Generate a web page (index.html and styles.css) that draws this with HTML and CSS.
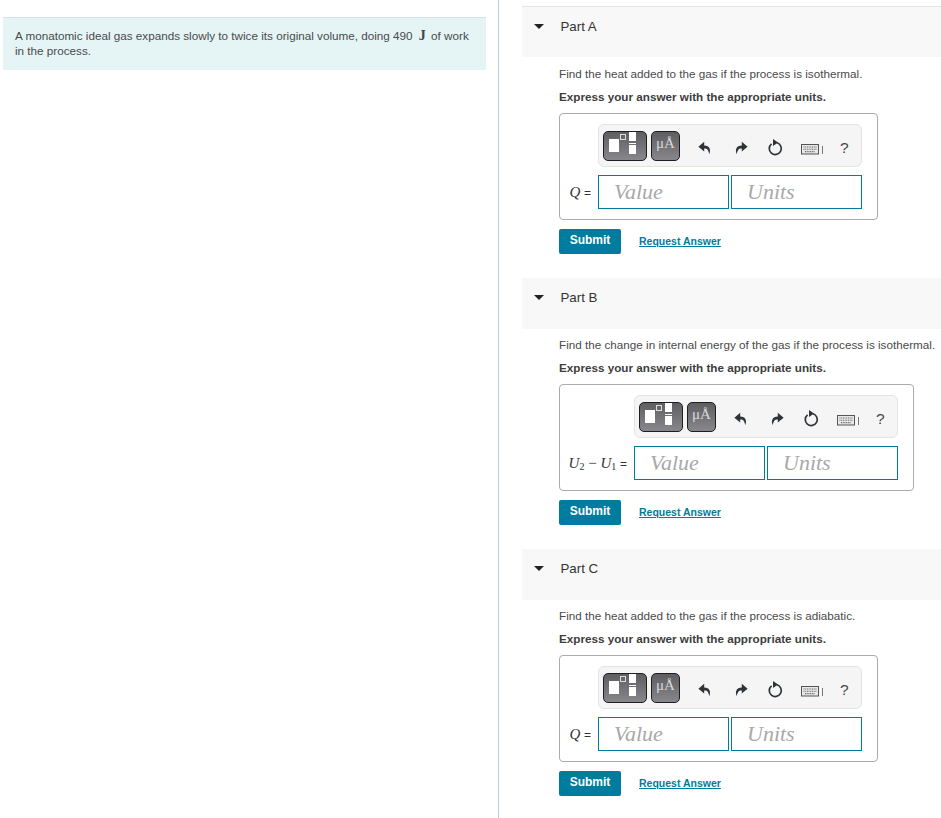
FILE: index.html
```html
<!DOCTYPE html>
<html lang="en">
<head>
<meta charset="utf-8">
<title>Monatomic ideal gas</title>
<link rel="stylesheet" href="styles.css">
</head>
<body>
<svg class="defs" width="0" height="0" aria-hidden="true">
  <defs>
    <symbol id="i-undo" viewBox="0 0 14 14"><path d="M6.200 .8 .4 5.800l5.800 4.700V7.600c2.700-.2 4.200.8 5 5.600 2-4.900.4-8.600-5-8.800z" fill="#2f3338"/></symbol>
    <symbol id="i-redo" viewBox="0 0 14 14"><path d="M7.800 .8 13.600 5.800 7.800 10.500V7.600C5.100 7.400 3.600 8.400 2.800 13.200.8 8.300 2.400 4.600 7.800 4.400z" fill="#2f3338"/></symbol>
    <symbol id="i-reset" viewBox="0 0 16 18"><path d="M10 4.800a6 6 0 1 1-5.400 1" fill="none" stroke="#2f3338" stroke-width="1.700"/><path d="M6 1 11 4.600 6 8z" fill="#2f3338"/></symbol>
    <symbol id="i-kbd" viewBox="0 0 24 12"><rect x=".5" y="1.500" width="17" height="9.500" fill="#e8e8e8" stroke="#555"/><path d="M2.500 4h13M2.500 6.200h13M4 8.600h10" stroke="#666" stroke-width="1.100" stroke-dasharray="1 .7"/><path d="M21.500 3v8" stroke="#777"/></symbol>
    <symbol id="i-tmpl" viewBox="0 0 44 30"><rect x="6" y="8" width="10" height="13" fill="#fff"/><rect x="17.500" y="3.500" width="5" height="5" fill="none" stroke="#ddd"/><rect x="26" y="1" width="7" height="9" fill="#fff"/><rect x="26" y="12" width="7" height="1" fill="#fff"/><rect x="26" y="14" width="7" height="9" fill="#fff"/></symbol>
  </defs>
</svg>
<div class="page">
  <aside class="intro">
    <div class="prompt">A monatomic ideal gas expands slowly to twice its original volume, doing 490 <span class="unit">J</span> of work in the process.</div>
  </aside>
  <main class="parts">

    <section class="part part-first">
      <header class="part-head"><span class="caret"></span><h2>Part A</h2></header>
      <div class="part-body">
        <p class="question">Find the heat added to the gas if the process is isothermal.</p>
        <p class="instruction">Express your answer with the appropriate units.</p>
        <div class="answer">
          <div class="answer-grid">
            <div></div>
            <div class="toolbar">
              <span class="tool tool-wide"><svg class="tmpl"><use href="#i-tmpl"/></svg></span>
              <span class="tool tool-unit">μÅ</span>
              <svg class="ico ico-undo"><use href="#i-undo"/></svg>
              <svg class="ico ico-redo"><use href="#i-redo"/></svg>
              <svg class="ico ico-reset"><use href="#i-reset"/></svg>
              <svg class="ico ico-kbd"><use href="#i-kbd"/></svg>
              <span class="help">?</span>
            </div>
            <div class="label"><i>Q</i> <span class="eq">=</span></div>
            <div class="fields"><span class="field">Value</span><span class="field">Units</span></div>
          </div>
        </div>
        <div class="actions"><button class="submit" type="button">Submit</button><a class="link" href="#a">Request Answer</a></div>
      </div>
    </section>

    <section class="part">
      <header class="part-head"><span class="caret"></span><h2>Part B</h2></header>
      <div class="part-body">
        <p class="question">Find the change in internal energy of the gas if the process is isothermal.</p>
        <p class="instruction">Express your answer with the appropriate units.</p>
        <div class="answer answer-wide">
          <div class="answer-grid">
            <div></div>
            <div class="toolbar">
              <span class="tool tool-wide"><svg class="tmpl"><use href="#i-tmpl"/></svg></span>
              <span class="tool tool-unit">μÅ</span>
              <svg class="ico ico-undo"><use href="#i-undo"/></svg>
              <svg class="ico ico-redo"><use href="#i-redo"/></svg>
              <svg class="ico ico-reset"><use href="#i-reset"/></svg>
              <svg class="ico ico-kbd"><use href="#i-kbd"/></svg>
              <span class="help">?</span>
            </div>
            <div class="label"><i>U</i><sub>2</sub> − <i>U</i><sub>1</sub> <span class="eq">=</span></div>
            <div class="fields"><span class="field">Value</span><span class="field">Units</span></div>
          </div>
        </div>
        <div class="actions"><button class="submit" type="button">Submit</button><a class="link" href="#b">Request Answer</a></div>
      </div>
    </section>

    <section class="part">
      <header class="part-head"><span class="caret"></span><h2>Part C</h2></header>
      <div class="part-body">
        <p class="question">Find the heat added to the gas if the process is adiabatic.</p>
        <p class="instruction">Express your answer with the appropriate units.</p>
        <div class="answer">
          <div class="answer-grid">
            <div></div>
            <div class="toolbar">
              <span class="tool tool-wide"><svg class="tmpl"><use href="#i-tmpl"/></svg></span>
              <span class="tool tool-unit">μÅ</span>
              <svg class="ico ico-undo"><use href="#i-undo"/></svg>
              <svg class="ico ico-redo"><use href="#i-redo"/></svg>
              <svg class="ico ico-reset"><use href="#i-reset"/></svg>
              <svg class="ico ico-kbd"><use href="#i-kbd"/></svg>
              <span class="help">?</span>
            </div>
            <div class="label"><i>Q</i> <span class="eq">=</span></div>
            <div class="fields"><span class="field">Value</span><span class="field">Units</span></div>
          </div>
        </div>
        <div class="actions"><button class="submit" type="button">Submit</button><a class="link" href="#c">Request Answer</a></div>
      </div>
    </section>

  </main>
</div>
</body>
</html>
```
FILE: styles.css
```css
* { box-sizing: border-box; }
html, body { margin: 0; height: 100%; background: #fff; }
body { font-family: "Liberation Sans", Arial, sans-serif; font-size: 11.7px; color: #3d3d3d; overflow: hidden; }
.defs { position: absolute; }
.page { display: flex; height: 818px; overflow: hidden; }

.intro { flex: 0 0 499px; padding: 17px 12px 0 3px; border-right: 1px solid #b9cde0; }
.prompt { background: #e5f5f6; border-top: 1px solid #d3e1e6; padding: 10px 12px 12px; height: 53px; line-height: 15px; color: #4a4a4a; }
.unit { font-family: "Liberation Serif", serif; font-size: 14px; font-weight: 700; margin: 0 2px 0 3px; color: #444; }

.parts { flex: 1; min-width: 0; padding: 6px 0 0 23px; }
.part { height: 271px; }
.part-first { height: 272px; }
.part-head { display: flex; background: #f8f8f8; height: 51px; padding-top: 12px; align-items: flex-start; }
.part-first .part-head { border-top: 1px solid #dfe4e8; }
.caret { width: 0; height: 0; margin: 5px 0 0 12px; border-left: 5px solid transparent; border-right: 5px solid transparent; border-top: 5px solid #222; }
.part-head h2 { margin: 0 0 0 16.500px; font-size: 13.300px; font-weight: 400; line-height: 16px; color: #333; }

.part-body { padding: 8px 0 0 37px; }
.part-first .part-body { padding-top: 9px; }
.question { margin: 0; line-height: 16px; height: 23px; white-space: nowrap; color: #4a4a4a; }
.instruction { margin: 0; line-height: 16px; height: 24px; font-weight: 700; color: #3d3d3d; white-space: nowrap; }

.answer { width: 319px; height: 107px; border: 1px solid #ababab; border-radius: 4px; padding: 10px 0 0 8px; }
.answer-wide { width: 355px; }
.answer-grid { display: grid; grid-template-columns: 30px 264px; justify-content: start; row-gap: 8px; align-items: center; }
.answer-wide .answer-grid { grid-template-columns: 66px 264px; }

.toolbar { display: flex; align-items: center; height: 43px; background: #f5f5f5; border: 1px solid #e3e3e3; border-radius: 6px; padding-left: 4px; }
.tool { display: flex; align-items: center; justify-content: center; height: 30px; background: linear-gradient(#5e5e62, #88888c); border: 1px solid #1f1f1f; border-radius: 5px; color: #d8d8d8; }
.tool-wide { width: 44px; margin-right: 4px; }
.tmpl { display: block; width: 44px; height: 30px; flex: none; }
.tool-unit { width: 29px; font-family: "Liberation Serif", serif; font-size: 15px; padding-bottom: 5px; }
.ico { display: block; flex: none; }
.ico-undo { width: 14px; height: 14px; margin: 5px 0 0 18px; }
.ico-redo { width: 14px; height: 14px; margin: 5px 0 0 22px; }
.ico-reset { width: 16px; height: 18px; margin: 3px 0 0 19px; }
.ico-kbd { width: 24px; height: 12px; margin: 7px 0 0 18px; }
.help { margin: 4px 0 0 15px; font-size: 15.500px; color: #444; }

.label { font: 15px "Liberation Serif", serif; white-space: nowrap; color: #333; text-align: right; padding-right: 7px; }
.label sub { font-size: 10px; line-height: 0; vertical-align: -2px; }
.eq { font: 12px "Liberation Sans", Arial, sans-serif; }
.fields { display: flex; gap: 2px; }
.field { flex: 1; height: 34px; border: 1px solid #007c9e; background: #fff; padding-left: 15px; font: italic 22px/31px "Liberation Serif", serif; color: #a8a8a8; }

.actions { display: flex; align-items: center; margin-top: 9px; }
.submit { width: 62px; height: 25px; padding: 0 0 3px; border: 0; border-radius: 2px; background: #007c9e; color: #fff; font: 700 12px "Liberation Sans", Arial, sans-serif; }
.link { margin: 0 0 2px 18px; color: #007c9e; font-size: 10.500px; font-weight: 700; text-decoration: underline; }
```
